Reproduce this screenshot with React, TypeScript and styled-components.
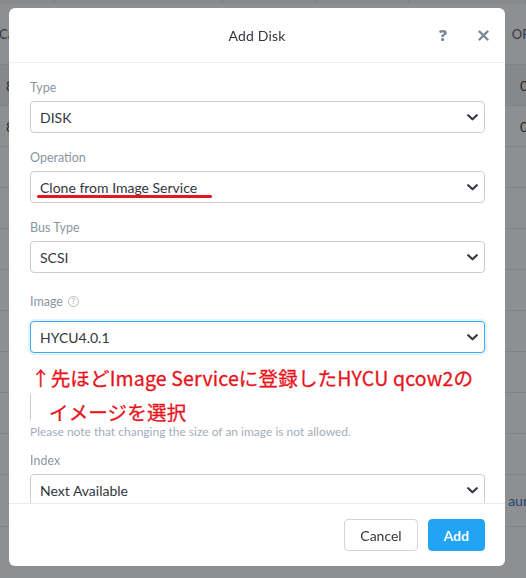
import React from "react";
import styled, { createGlobalStyle } from "styled-components";

const GlobalStyle = createGlobalStyle`
  html, body {
    margin: 0;
    padding: 0;
    width: 526px;
    height: 578px;
    overflow: hidden;
    background: #ffffff;
    font-family: Lato, "Open Sans", sans-serif;
  }
  * {
    box-sizing: border-box;
  }
`;

//Data
const fields = [
  { label: "Type", value: "DISK", top: 0 },
  { label: "Operation", value: "Clone from Image Service", top: 17, marked: true },
  { label: "Bus Type", value: "SCSI", top: 17 },
];

const tableRows = [
  { left: "8", right: "0", active: true },
  { left: "8", right: "0" },
  {},
  {},
  {},
  {},
  {},
  {},
  {},
  {},
];

const Chevron: React.FC = () => (
  <svg width="11" height="7" viewBox="0 0 11 7">
    <polyline
      points="1.2,1.2 5.5,5.3 9.8,1.2"
      fill="none"
      stroke="#353b42"
      strokeWidth="2.2"
      strokeLinecap="round"
      strokeLinejoin="round"
    />
  </svg>
);

const App: React.FC = () => {
  return (
    <>
      <GlobalStyle />
      <Page>
        <TopStrip>
          <StripCell $w={55} />
          <StripCell $w={168} />
          <StripCell $w={93} />
          <StripCell $w={93} />
          <StripCell $w={117} />
        </TopStrip>
        <TableHead>
          <span>Ca</span>
          <span>OP</span>
        </TableHead>
        {tableRows.map((row, i) => (
          <TableRow key={i} $active={row.active}>
            <span>{row.left}</span>
            <span>{row.right}</span>
          </TableRow>
        ))}
        <TableRow $tall>
          <span />
          <LinkText>aur</LinkText>
        </TableRow>
      </Page>

      <Overlay>
        <Modal>
          <Header>
            <Title>Add Disk</Title>
            <HeaderActions>
              <HelpGlyph>?</HelpGlyph>
              <svg width="11" height="11" viewBox="0 0 11 11">
                <path
                  d="M1.5 1.5 L9.5 9.5 M9.5 1.5 L1.5 9.5"
                  stroke="#7b8794"
                  strokeWidth="2.4"
                  strokeLinecap="round"
                />
              </svg>
            </HeaderActions>
          </Header>

          <Body>
            {fields.map((f) => (
              <Field key={f.label} $top={f.top}>
                <Label>{f.label}</Label>
                <SelectBox>
                  <span>{f.value}</span>
                  <Chevron />
                  {f.marked && <RedMark />}
                </SelectBox>
              </Field>
            ))}

            <Field $top={21}>
              <Label $gap={13}>
                Image
                <InfoCircle>?</InfoCircle>
              </Label>
              <SelectBox $focused>
                <span>HYCU4.0.1</span>
                <Chevron />
              </SelectBox>
            </Field>

            {/* size input, hidden under the pasted note */}
            <Field $top={17}>
              <Label />
              <SelectBox />
              <Callout>
                <CalloutLine>↑先ほどImage Serviceに登録したHYCU qcow2の</CalloutLine>
                <CalloutLine $indent={18}>イメージを選択</CalloutLine>
              </Callout>
            </Field>
            <Helper>
              Please note that changing the size of an image is not allowed.
            </Helper>

            <Field $top={15}>
              <Label>Index</Label>
              <SelectBox>
                <span>Next Available</span>
                <Chevron />
              </SelectBox>
            </Field>
          </Body>

          <Footer>
            <Button>Cancel</Button>
            <Button $primary>Add</Button>
          </Footer>
        </Modal>
      </Overlay>
    </>
  );
};

const Page = styled.div`
  width: 526px;
  height: 578px;
  background: #ffffff;
  font-family: Lato, sans-serif;
  color: #2f3338;
  font-size: 13px;
`;

const TopStrip = styled.div`
  display: flex;
  height: 4px;
  background: #f2f3f4;
`;

const StripCell = styled.div<{ $w: number }>`
  width: ${(p) => p.$w}px;
  border-right: 1px solid #dcdfe2;
`;

const TableHead = styled.div`
  display: flex;
  justify-content: space-between;
  align-items: center;
  height: 61px;
  border-bottom: 1px solid #e2e5e8;
  color: #4a5058;
  font-size: 13px;
  span:first-child {
    margin-left: -1px;
  }
  span:last-child {
    margin-right: -4px;
  }
`;

const TableRow = styled.div<{ $active?: boolean; $tall?: boolean }>`
  display: flex;
  justify-content: space-between;
  align-items: center;
  height: ${(p) => (p.$tall ? 52 : 41)}px;
  padding: 0 6px;
  border-bottom: 1px solid #e2e5e8;
  background: ${(p) => (p.$active ? "#f1f3f5" : "#ffffff")};
  font-size: 14px;
  span:last-child {
    margin-right: -8px;
  }
`;

const LinkText = styled.span`
  color: #1e6fc4;
  font-size: 14px;
`;

const Overlay = styled.div`
  position: fixed;
  inset: 0;
  background: rgba(28, 32, 36, 0.5);
  padding: 8px 0 0 9px;
`;

const Modal = styled.div`
  width: 496px;
  height: 558px;
  background: #ffffff;
  border-radius: 6px;
  display: flex;
  flex-direction: column;
  overflow: hidden;
  font-family: Lato, "Open Sans", sans-serif;
`;

const Header = styled.div`
  position: relative;
  height: 55px;
  flex: none;
  display: flex;
  align-items: center;
  justify-content: center;
  border-bottom: 1px solid #eef0f2;
`;

const Title = styled.div`
  font-size: 14px;
  color: #33383d;
  letter-spacing: 0.2px;
`;

const HeaderActions = styled.div`
  position: absolute;
  right: 16px;
  top: 0;
  height: 100%;
  display: flex;
  align-items: center;
  gap: 31px;
`;

const HelpGlyph = styled.span`
  font-family: "Open Sans", sans-serif;
  font-size: 16px;
  font-weight: 800;
  color: #7b8794;
`;

const Body = styled.div`
  flex: 1;
  overflow: hidden;
  padding: 17px 20px 0 21px;
  display: flex;
  flex-direction: column;
`;

const Field = styled.div<{ $top: number }>`
  position: relative;
  flex: none;
  display: flex;
  flex-direction: column;
  margin-top: ${(p) => p.$top}px;
`;

const Label = styled.div<{ $gap?: number }>`
  display: flex;
  align-items: center;
  gap: 5px;
  height: 14px;
  margin-bottom: ${(p) => p.$gap ?? 7}px;
  font-size: 12.5px;
  color: #8a95a2;
`;

const InfoCircle = styled.span`
  width: 11px;
  height: 11px;
  border: 1px solid #b3bbc4;
  border-radius: 50%;
  font-size: 8px;
  line-height: 9px;
  text-align: center;
  color: #a3acb6;
`;

const SelectBox = styled.div<{ $focused?: boolean }>`
  position: relative;
  height: 32px;
  flex: none;
  display: flex;
  align-items: center;
  justify-content: space-between;
  padding: 0 6px 0 9px;
  border: 1px solid ${(p) => (p.$focused ? "#3ea8f2" : "#c9ced5")};
  border-radius: 4px;
  box-shadow: ${(p) => (p.$focused ? "0 0 0 2px rgba(62, 168, 242, 0.14)" : "none")};
  font-size: 14px;
  color: #32373c;
  background: #ffffff;
`;

const RedMark = styled.div`
  position: absolute;
  left: 6px;
  top: 23px;
  width: 175px;
  height: 3px;
  border-radius: 2px;
  background: #e3171f;
`;

const Callout = styled.div`
  position: absolute;
  left: 1px;
  top: -9px;
  width: 460px;
  height: 64px;
  background: #ffffff;
  display: flex;
  flex-direction: column;
`;

const CalloutLine = styled.div<{ $indent?: number }>`
  height: 34px;
  line-height: 34px;
  padding-left: ${(p) => p.$indent ?? 0}px;
  font-family: "Noto Sans CJK JP", sans-serif;
  font-size: 19.5px;
  font-weight: 400;
  color: #e8141c;
  white-space: nowrap;
  letter-spacing: 0.17px;
  -webkit-text-stroke: 0.3px #e8141c;
`;

const Helper = styled.div`
  margin-top: 3px;
  height: 12px;
  line-height: 12px;
  font-size: 12px;
  color: #a4adb8;
`;

const Footer = styled.div`
  height: 63px;
  flex: none;
  border-top: 1px solid #e9ebee;
  display: flex;
  align-items: center;
  justify-content: flex-end;
  gap: 10px;
  padding: 0 20px 0 0;
`;

const Button = styled.button<{ $primary?: boolean }>`
  height: 32px;
  padding: 0;
  border-radius: 4px;
  border: 1px solid ${(p) => (p.$primary ? "#22a4f5" : "#d0d5db")};
  background: ${(p) => (p.$primary ? "#22a4f5" : "#ffffff")};
  color: ${(p) => (p.$primary ? "#ffffff" : "#33383d")};
  font-family: Lato, sans-serif;
  font-size: 14px;
  font-weight: ${(p) => (p.$primary ? 700 : 400)};
  width: ${(p) => (p.$primary ? 57 : 74)}px;
`;

export default App;
